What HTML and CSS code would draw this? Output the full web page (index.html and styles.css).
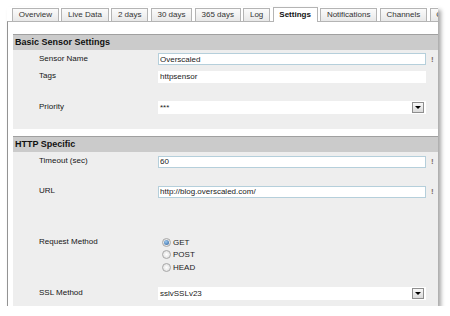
FILE: index.html
```html
<!DOCTYPE html>
<html lang="en">

<head>
    <meta charset="UTF-8">
    <meta name="viewport" content="width=device-width, initial-scale=1.0">
    <title>Sensor Settings</title>
    <link rel="stylesheet" href="styles.css">
</head>

<body>
    <div class="window">
        <div class="tabs">
            <div class="tab">Overview</div>
            <div class="tab">Live Data</div>
            <div class="tab">2 days</div>
            <div class="tab">30 days</div>
            <div class="tab">365 days</div>
            <div class="tab">Log</div>
            <div class="tab active">Settings</div>
            <div class="tab">Notifications</div>
            <div class="tab">Channels</div>
            <div class="tab">Comments</div>
        </div>

        <div class="content">
            <div class="section">
                <div class="section-head">Basic Sensor Settings</div>
                <div class="row row-1">
                    <div class="label">Sensor Name</div>
                    <input type="text" class="field required" value="Overscaled">
                    <span class="mark">!</span>
                </div>
                <div class="row row-2">
                    <div class="label">Tags</div>
                    <input type="text" class="field" value="httpsensor">
                </div>
                <div class="row row-3">
                    <div class="label">Priority</div>
                    <div class="select">
                        <span>***</span>
                        <span class="drop"><i class="arrow"></i></span>
                    </div>
                </div>
            </div>

            <div class="section">
                <div class="section-head">HTTP Specific</div>
                <div class="row row-4">
                    <div class="label">Timeout (sec)</div>
                    <input type="text" class="field required" value="60">
                    <span class="mark">!</span>
                </div>
                <div class="row row-5">
                    <div class="label">URL</div>
                    <input type="text" class="field required" value="http://blog.overscaled.com/">
                    <span class="mark">!</span>
                </div>
                <div class="row row-6">
                    <div class="label">Request Method</div>
                    <div class="radios">
                        <label class="radio"><span class="dot checked"></span>GET</label>
                        <label class="radio"><span class="dot"></span>POST</label>
                        <label class="radio"><span class="dot"></span>HEAD</label>
                    </div>
                </div>
                <div class="row row-7">
                    <div class="label">SSL Method</div>
                    <div class="select">
                        <span>sslvSSLv23</span>
                        <span class="drop"><i class="arrow"></i></span>
                    </div>
                </div>
            </div>
        </div>
    </div>
</body>

</html>
```

FILE: styles.css
```css
body {
    margin: 0;
    padding: 0;
    background-color: #fff;
    font-family: "Liberation Sans", Arial, sans-serif;
    font-size: 8px;
    color: #222;
}

.window {
    margin: 7px 0 0 7px;
    width: 431px;
    height: 299px;
    overflow: hidden;
    display: flex;
    flex-direction: column;
    box-shadow: 3px 3px 4px rgba(0, 0, 0, 0.35);
}

.tabs {
    display: flex;
    align-items: flex-end;
    height: 14px;
    padding-left: 5px;
    white-space: nowrap;
}

.tab {
    flex-shrink: 0;
    height: 12px;
    line-height: 12px;
    padding: 0 5.75px;
    margin-right: 2.5px;
    border: 1px solid #b4b4b4;
    border-bottom: none;
    background: linear-gradient(#fbfbfb, #e8e8e8);
    color: #333;
}

.tab.active {
    height: 14px;
    line-height: 14px;
    margin-bottom: -1px;
    position: relative;
    background: #fff;
    font-weight: bold;
    color: #111;
}

.content {
    flex: 1;
    background-color: #fff;
    border-left: 1px solid #939393;
    border-top: 1px solid #b4b4b4;
    padding: 12px 0 0 5px;
}

.section {
    background-color: #eeeeee;
}

.section + .section {
    margin-top: 7px;
}

.section-head {
    height: 15px;
    line-height: 15px;
    padding-left: 2px;
    border-top: 1px solid #a0a0a0;
    background-color: #cbcbcb;
    font-size: 9px;
    font-weight: bold;
    color: #111;
}

.row {
    display: flex;
    align-items: center;
}

.row-1 { height: 18px; }
.row-2 { height: 17px; }
.row-3 { height: 44px; }
.row-4 { height: 19px; }
.row-5 { height: 41px; }
.row-7 { height: 26px; }

.row-6 {
    height: 68px;
    align-items: flex-start;
    padding-top: 24px;
    box-sizing: border-box;
}

.label {
    width: 119px;
    padding-left: 26px;
    flex-shrink: 0;
    line-height: 12.5px;
    color: #151515;
}

.field {
    box-sizing: border-box;
    width: 268px;
    height: 12px;
    margin: 0;
    padding: 0 1px;
    border: 1px solid #fff;
    background-color: #fff;
    font-family: inherit;
    font-size: 8px;
    color: #222;
    outline: none;
}

.field.required {
    border-color: #b5cfdb;
}

.mark {
    margin-left: 5px;
    font-size: 8px;
    font-weight: bold;
    color: #7d6c6c;
}

.select {
    box-sizing: border-box;
    width: 268px;
    height: 13px;
    padding: 0 2px 0 2px;
    display: flex;
    align-items: center;
    justify-content: space-between;
    background-color: #fff;
}

.drop {
    box-sizing: border-box;
    width: 12px;
    height: 11px;
    border: 1px solid #8e8e8e;
    background: linear-gradient(#f8f8f8, #dadada);
    display: flex;
    align-items: center;
    justify-content: center;
}

.arrow {
    width: 0;
    height: 0;
    margin-top: 1px;
    border-left: 3px solid transparent;
    border-right: 3px solid transparent;
    border-top: 3px solid #000;
}

.radios {
    display: flex;
    flex-direction: column;
    padding-left: 4px;
}

.radio {
    display: flex;
    align-items: center;
    height: 12.5px;
    color: #222;
}

.dot {
    box-sizing: border-box;
    width: 9px;
    height: 9px;
    margin-right: 2px;
    border-radius: 50%;
    border: 1px solid #a8a8a8;
    background: radial-gradient(#ffffff, #d9d9d9);
    display: flex;
    align-items: center;
    justify-content: center;
}

.dot.checked::after {
    content: "";
    width: 5px;
    height: 5px;
    border-radius: 50%;
    background: radial-gradient(circle at 40% 35%, #9cc9f0, #2b5f9c);
}
```
